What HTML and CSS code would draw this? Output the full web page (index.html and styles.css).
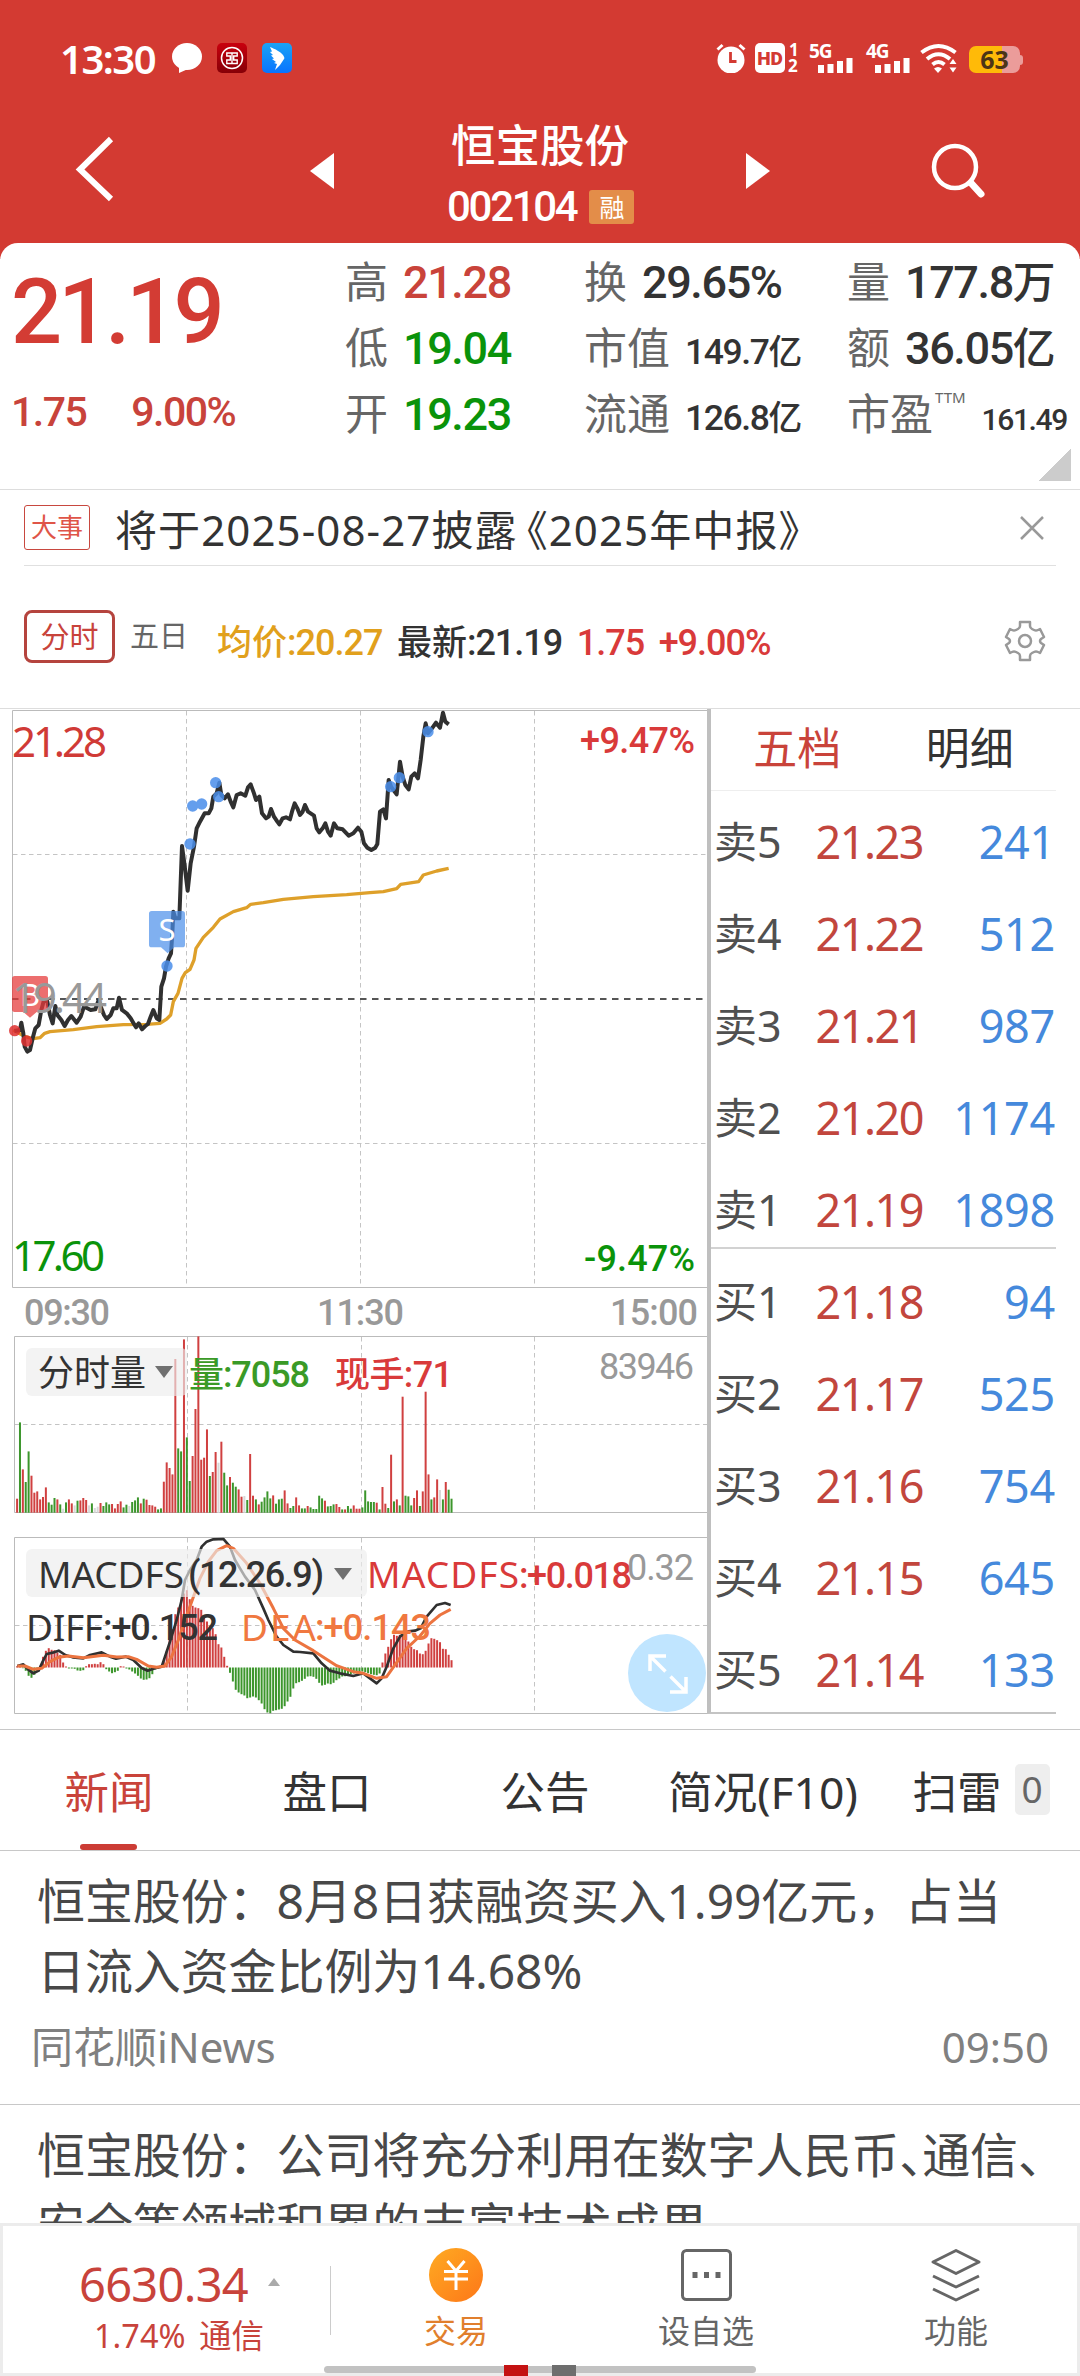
FILE: index.html
```
<!DOCTYPE html>
<html lang="zh-CN">
<head>
    <meta charset="UTF-8">
    <title>恒宝股份 002104</title>
    <link rel="stylesheet" href="styles.css">
</head>
<body>

<div class="app">
    <header class="header">
        <div class="status">
            <span class="clock">13:30</span>
            <svg class="bubble" width="30" height="30" viewBox="0 0 30 30"><ellipse cx="15" cy="13.5" rx="15" ry="13.5" fill="#fff"/><path d="M7 22v8l9-4z" fill="#fff"/></svg>
            <svg class="bank" width="30" height="30" viewBox="0 0 30 30">
                <defs><linearGradient id="bankBg" x2="0" y2="1"><stop offset="0" stop-color="#c9000e"/><stop offset="1" stop-color="#860007"/></linearGradient></defs>
                <rect width="30" height="30" rx="5" fill="url(#bankBg)"/>
                <circle cx="15" cy="15" r="10.500" fill="none" stroke="#fff" stroke-width="1.5"/>
                <path d="M9.800 10h10.400v3h-3.500v4h3.500v3.500H9.800V17h3.500v-4H9.800zM15 10v10.500" fill="none" stroke="#fff" stroke-width="1.400"/>
            </svg>
            <svg class="ding" width="30" height="30" viewBox="0 0 30 30">
                <defs><linearGradient id="dingBg" x2="0" y2="1"><stop offset="0" stop-color="#1ba3f5"/><stop offset="1" stop-color="#0873ff"/></linearGradient></defs>
                <rect width="30" height="30" rx="5" fill="url(#dingBg)"/>
                <path d="M8 4c5 2 11 5 13 8 1 2 2 3 1 4l-4 6-5 5 2-6-3-1 2-1-4-3 2-.5-3-3 2-.5-3-3 2-.5z" fill="#fff"/>
            </svg>
            <div class="status-right">
                <svg width="30" height="30" viewBox="0 0 30 30"><circle cx="15" cy="17" r="13.500" fill="#fff"/><path d="M1.500 6.500l5-4.500M28.500 6.500l-5-4.500" stroke="#fff" stroke-width="3"/><path d="M14.500 9v9.500h6" fill="none" stroke="#d33a32" stroke-width="2.800"/></svg>
                <span class="hd">HD</span>
                <span class="sim"><b>1</b><b>2</b></span>
                <span class="signal"><b>5G</b><svg width="36" height="17" viewBox="0 0 36 17"><path d="M3 17v-8M12.500 17v-9M22 17v-12M31.500 17v-15" stroke="#fff" stroke-width="6"/></svg></span>
                <span class="signal"><b>4G</b><svg width="36" height="17" viewBox="0 0 36 17"><path d="M3 17v-8M12.500 17v-9M22 17v-12M31.500 17v-15" stroke="#fff" stroke-width="6"/></svg></span>
                <svg class="wifi" width="38" height="30" viewBox="0 0 38 30">
                    <path d="M1.500 9.500q17-13 34 0M7 16q11.500-9.500 23 0M12.500 21.500q6-5 12 0" fill="none" stroke="#fff" stroke-width="4"/>
                    <path d="M14 25.500q4-3 8 0l-4 4.500z" fill="#fff"/>
                    <path d="M29.500 21l3.500-5 3.500 5zM29.500 24.500h7l-3.500 5z" fill="#fff"/>
                </svg>
                <span class="battery">63</span>
            </div>
        </div>
        <div class="titlebar">
            <svg class="back" width="40" height="68" viewBox="0 0 40 68"><path d="M36 4L5 34.500 36 64" fill="none" stroke="#fff" stroke-width="6"/></svg>
            <svg class="prev" width="24" height="36" viewBox="0 0 24 36"><path d="M24 0v36L0 18z" fill="#fff"/></svg>
            <div class="stock">
                <div class="stock-name">恒宝股份</div>
                <div class="stock-code"><span>002104</span><em>融</em></div>
            </div>
            <svg class="next" width="24" height="36" viewBox="0 0 24 36"><path d="M0 0v36l24-18z" fill="#fff"/></svg>
            <svg class="search" width="56" height="58" viewBox="0 0 56 58"><circle cx="24" cy="24" r="21" fill="none" stroke="#fff" stroke-width="4.500"/><path d="M40 40l10 11" stroke="#fff" stroke-width="7" stroke-linecap="round"/></svg>
        </div>
    </header>

    <main class="content">
        <section class="quote">
            <div class="price">
                <div class="last">21.19</div>
                <div class="change"><span>1.75</span><span>9.00%</span></div>
            </div>
            <div class="stats">
                <div class="stat">高 <b class="red">21.28</b></div>
                <div class="stat">换 <b>29.65%</b></div>
                <div class="stat">量 <b>177.8<i>万</i></b></div>
                <div class="stat">低 <b class="green">19.04</b></div>
                <div class="stat">市值 <b class="mid">149.7<i>亿</i></b></div>
                <div class="stat">额 <b>36.05<i>亿</i></b></div>
                <div class="stat">开 <b class="green">19.23</b></div>
                <div class="stat">流通 <b class="mid">126.8<i>亿</i></b></div>
                <div class="stat">市盈<sup>TTM</sup> <b class="small">161.49</b></div>
            </div>
            <div class="corner"></div>
        </section>

        <section class="notice">
            <span class="notice-tag">大事</span>
            <span class="notice-text">将于2025-08-27披露<span class="open">《</span>2025年中报》</span>
            <svg class="close" width="24" height="24" viewBox="0 0 24 24"><path d="M1 1l22 22M23 1L1 23" stroke="#999" stroke-width="2.500"/></svg>
        </section>

        <section class="periods">
            <span class="period active">分时</span>
            <span class="period">五日</span>
            <div class="legend">
                <span class="avg"><i>均价</i>:20.27</span>
                <span><i>最新</i>:21.19</span>
                <span class="up">1.75</span>
                <span class="up">+9.00%</span>
            </div>
            <svg class="gear" width="42" height="42" viewBox="0 0 42 42" fill="none" stroke="#999" stroke-width="2.500" stroke-linejoin="round">
                <path d="M16 2h10v4q0 2 2 3l2 1q2 1 4 0l2-1 4 8-3 2q-1 1-1 2t1 2l3 2-4 8-2-1q-2-1-4 0l-2 1q-2 1-2 3v4H16v-4q0-2-2-3l-2-1q-2-1-4 0l-2 1-4-8 3-2q1-1 1-2t-1-2l-3-2 4-8 2 1q2 1 4 0l2-1q2-1 2-3z"/>
                <circle cx="21" cy="21" r="6"/>
            </svg>
        </section>

        <section class="market">
            <svg class="charts" width="707" height="1020" viewBox="0 709 707 1020">
                <!-- frames and grid -->
                <g class="frame">
                    <path d="M707 710.500H12.500v577H707"/>
                    <path d="M707 1336.500H14.500v176H707"/>
                    <path d="M707 1537.500H14.500v176H707"/>
                </g>
                <g class="grid">
                    <path d="M186.500 711v576M360.500 711v576M534.500 711v576M13 854.500h694M13 1143.500h694"/>
                    <path d="M187.500 1337v175M361.500 1337v175M534.500 1337v175M15 1424.500h692"/>
                    <path d="M187.500 1538v175M361.500 1538v175M534.500 1538v175M15 1625.500h692"/>
                </g>
                <path class="zero" d="M12 999h695"/>

                <!-- price and average -->
                <g transform="translate(0 700) scale(.33333)">
                    <polyline class="line-avg" points="40,990 75,1010 100,1016 120,1013 134,1000 150,995 220,989 290,980 370,974 440,973 480,970 500,957 512,945 520,905 534,880 546,835 556,818 570,808 582,780 588,745 610,712 640,682 660,657 700,635 740,623 752,613 790,608 850,598 940,590 1040,584 1110,578 1150,575 1190,566 1202,553 1256,545 1270,525 1310,513 1346,505"/>
                    <polyline class="line-price" points="43,993 60,990 64,968 70,1000 74,1040 82,1055 90,1050 98,1015 106,985 116,975 124,930 132,900 142,905 150,945 158,970 166,918 172,945 184,960 194,978 204,960 214,948 230,968 242,950 252,920 262,925 272,930 286,928 296,900 304,925 312,945 320,957 332,945 340,925 350,925 357,893 366,930 380,940 392,955 402,972 408,982 416,970 426,988 436,978 444,972 452,950 460,930 470,955 478,960 484,860 492,835 498,800 506,775 513,760 517,700 520,635 526,655 538,655 546,438 553,490 563,572 572,490 582,440 590,385 600,365 614,340 626,340 634,325 640,290 650,280 658,248 664,285 674,295 684,283 692,305 700,322 710,285 722,280 736,287 744,262 752,253 762,280 768,300 778,290 786,340 798,355 806,350 813,327 822,350 832,365 838,373 848,355 858,352 870,358 876,335 884,310 892,325 900,345 908,335 915,315 924,335 942,347 950,385 958,397 968,385 976,370 984,395 992,407 1002,370 1012,385 1028,388 1046,407 1060,400 1074,383 1084,395 1092,430 1102,443 1114,450 1126,443 1132,432 1140,335 1150,328 1158,355 1166,240 1174,262 1190,283 1200,185 1208,230 1216,255 1226,268 1234,230 1244,220 1254,235 1262,180 1270,110 1277,70 1284,100 1296,85 1308,68 1320,83 1329,38 1336,65 1346,73"/>
                    <g class="sell-dot"><circle cx="647" cy="248" r="17"/><circle cx="656" cy="290" r="17"/><circle cx="578" cy="318" r="17"/><circle cx="605" cy="312" r="17"/><circle cx="570" cy="432" r="17"/><circle cx="501" cy="798" r="17"/><circle cx="1172" cy="260" r="17"/><circle cx="1198" cy="233" r="17"/><circle cx="1284" cy="95" r="17"/></g>
                    <g class="buy-dot"><circle cx="44" cy="992" r="17"/><circle cx="80" cy="1023" r="17"/></g>
                    <path d="M455 633h92q8 0 8 8v93q0 8-8 8h-24l-20 18-20-18h-28q-8 0-8-8v-93q0-8 8-8z" fill="#4a8eea" opacity=".7"/>
                    <path d="M44 828h92q8 0 8 8v92q0 8-8 8h-26l-20 17-20-17h-26q-8 0-8-8v-92q0-8 8-8z" fill="#e63c3c" opacity=".74"/>
                </g>
                <text class="mark" x="167" y="941" text-anchor="middle">S</text>
                <text class="mark" x="30" y="1006" text-anchor="middle">B</text>

                <text class="axis red" x="12" y="756.500" textLength="95">21.28</text>
                <text class="axis grey" x="12" y="1012.500" textLength="95">19.44</text>
                <text class="axis green" x="12" y="1270.500" textLength="93">17.60</text>
                <text class="num up" x="580" y="753" textLength="115">+9.47%</text>
                <text class="num green" x="584" y="1271" textLength="111">-9.47%</text>
                <text class="num grey" x="24" y="1325" textLength="86">09:30</text>
                <text class="num grey" x="317" y="1325" textLength="87">11:30</text>
                <text class="num grey" x="610" y="1325" textLength="88">15:00</text>

                <!-- volume -->
                <g id="volume"></g>
                <rect class="chip" x="26" y="1348" width="161" height="48" rx="6"/>
                <text class="cjk dark" x="38" y="1386" textLength="108">分时量</text>
                <path class="caret" d="M155 1366h18l-9 12z"/>
                <text class="num vol-green" x="189" y="1386.500" textLength="121"><tspan class="cjk">量</tspan>:7058</text>
                <text class="num up" x="335" y="1386.500" textLength="118"><tspan class="cjk">现手</tspan>:71</text>
                <text class="num grey light" x="599" y="1379" textLength="95">83946</text>

                <!-- macd -->
                <g id="macd"></g>
                <g transform="translate(0 1280) scale(.33333)">
                    <polyline class="line-diff" points="52,1158 70,1153 84,1168 100,1180 116,1172 128,1145 140,1122 158,1118 176,1112 196,1125 218,1132 250,1135 270,1125 305,1117 330,1130 348,1136 378,1130 400,1140 425,1164 443,1172 465,1165 485,1160 495,1130 510,1085 530,1020 545,960 555,900 570,870 590,840 605,800 620,785 640,778 670,777 690,800 705,840 735,890 765,930 790,985 805,1020 830,1070 850,1095 880,1115 900,1116 940,1120 965,1150 990,1172 1020,1180 1060,1188 1090,1180 1110,1195 1130,1210 1145,1195 1160,1160 1180,1105 1200,1070 1220,1055 1245,1052 1262,1045 1280,1010 1310,975 1335,969 1352,975"/>
                    <polyline class="line-dea" points="52,1158 75,1158 100,1168 125,1165 150,1145 175,1132 205,1128 250,1133 310,1126 350,1131 385,1130 410,1138 445,1158 470,1162 495,1158 515,1130 535,1080 555,1020 575,965 600,895 625,845 650,812 680,797 700,805 740,850 780,910 820,985 850,1045 885,1080 940,1112 975,1135 1010,1157 1060,1175 1090,1180 1130,1195 1160,1190 1185,1155 1220,1105 1260,1068 1290,1030 1320,1005 1352,988"/>
                </g>
                <rect class="chip" x="26" y="1549" width="341" height="48" rx="6"/>
                <text class="latin dark" x="38" y="1588" textLength="146">MACDFS</text>
                <text class="num dark" x="188" y="1587" textLength="136">(12.26.9)</text>
                <path class="caret" d="M334 1568h18l-9 12z"/>
                <text class="latin up" x="367" y="1588" textLength="152">MACDFS</text>
                <text class="num up" x="519" y="1587.500" textLength="113">:+0.018</text>
                <text class="num grey light" x="627" y="1580" textLength="67">0.32</text>
                <text class="latin dark" x="26" y="1640.500" textLength="77">DIFF</text>
                <text class="num dark" x="103" y="1640" textLength="115">:+0.152</text>
                <text class="latin dea" x="241" y="1640.500" textLength="75">DEA</text>
                <text class="num dea" x="315" y="1640" textLength="116">:+0.143</text>

                <circle cx="667" cy="1673" r="39" fill="#c0e5ff"/>
                <path d="M650 1671v-15h16M650.500 1656.500l15 15M686 1677v15h-16M685.500 1691.500l-15-15" fill="none" stroke="#fff" stroke-width="3.500"/>
            </svg>

            <div class="book">
                <div class="book-tabs"><span class="active">五档</span><span>明细</span></div>
                <div class="levels sell">
                    <div class="level"><span>卖5</span><b>21.23</b><i>241</i></div>
                    <div class="level"><span>卖4</span><b>21.22</b><i>512</i></div>
                    <div class="level"><span>卖3</span><b>21.21</b><i>987</i></div>
                    <div class="level"><span>卖2</span><b>21.20</b><i>1174</i></div>
                    <div class="level"><span>卖1</span><b>21.19</b><i>1898</i></div>
                </div>
                <div class="levels buy">
                    <div class="level"><span>买1</span><b>21.18</b><i>94</i></div>
                    <div class="level"><span>买2</span><b>21.17</b><i>525</i></div>
                    <div class="level"><span>买3</span><b>21.16</b><i>754</i></div>
                    <div class="level"><span>买4</span><b>21.15</b><i>645</i></div>
                    <div class="level"><span>买5</span><b>21.14</b><i>133</i></div>
                </div>
            </div>
        </section>

        <nav class="tabs">
            <span class="tab active">新闻</span>
            <span class="tab">盘口</span>
            <span class="tab">公告</span>
            <span class="tab">简况(F10)</span>
            <span class="tab">扫雷<em>0</em></span>
        </nav>

        <article class="news">
            <h2>恒宝股份：8月8日获融资买入1.99亿元，占当<br>日流入资金比例为14.68%</h2>
            <div class="meta"><span>同花顺iNews</span><span>09:50</span></div>
        </article>
        <article class="news">
            <h2>恒宝股份：公司将充分利用在数字人民币<span class="half">、</span>通信、<br>安全等领域积累的丰富技术成果</h2>
        </article>
    </main>

    <footer class="bottom">
        <div class="index">
            <div class="index-value">6630.34 <i></i></div>
            <div class="index-change">1.74% <span>通信</span></div>
        </div>
        <div class="action trade">
            <svg width="54" height="54" viewBox="0 0 54 54">
                <defs><linearGradient id="coin" x2="1" y2="1"><stop offset="0" stop-color="#ffab22"/><stop offset="1" stop-color="#fd7718"/></linearGradient></defs>
                <circle cx="27" cy="27" r="27" fill="url(#coin)"/>
                <path d="M18.500 13l8.500 10 8.500-10M27 23v19M15 23.500h24M15 31h24" fill="none" stroke="#fff" stroke-width="3"/>
            </svg>
            <span>交易</span>
        </div>
        <div class="action">
            <svg width="54" height="54" viewBox="0 0 54 54"><rect x="3.500" y="2.500" width="48" height="49" rx="4" fill="none" stroke="#666" stroke-width="3"/><path d="M13.500 27h5M25 27h5M36.500 27h5" stroke="#666" stroke-width="6"/></svg>
            <span>设自选</span>
        </div>
        <div class="action">
            <svg width="54" height="54" viewBox="0 0 54 54" fill="none" stroke="#666" stroke-width="3" stroke-linejoin="round"><path d="M27 2.500L50 14 27 25.500 4 14z"/><path d="M4 28l23 11 23-11M4 41l23 11 23-11"/></svg>
            <span>功能</span>
        </div>
        <div class="home-bar"><i></i><i></i></div>
    </footer>
</div>

<script>
    // one bar per minute from 09:30: r = up, g = down, w = flat
    const volume = 'r42 g271 r130 g92 g184 r111 r60 r64 r40 r47 r76 g31 g24 g44 r40 g25 w12 g31 r40 r28 w22 g36 r37 r44 r38 w22 g28 w14 w18 r29 g20 g31 g25 r26 r13 r26 r34 g16 g24 w20 g32 g37 g46 r28 g42 r39 r23 r22 r18 g10 g13 r93 r151 r134 r115 r461 g193 g184 r520 g226 g95 r170 r311 r529 r159 r165 r250 g110 r122 r182 w150 r213 g120 g82 r107 g90 g78 r70 r48 w50 g38 r176 r51 g40 r25 g33 g46 g64 g43 r52 g27 g40 g42 r67 r28 g14 g20 r46 r22 g13 g13 r20 g16 g11 g11 g51 g43 r36 g19 g20 g25 r26 r17 g10 r10 g20 g12 r22 r12 r12 g16 g67 g34 g32 g32 r30 g10 r77 r27 g14 r174 g34 r40 g22 r348 g51 g49 g22 r44 r67 g20 r64 r363 r115 g40 r46 r100 w68 g40 r92 g69 g42'.split(' ');
    const macd = [4,3,-2,-10,-25,-31,-22,-12,5,32,50,58,53,52,45,38,15,3,-3,-3,-4,-9,-10,-8,4,10,10,11,10,16,10,-5,-12,-17,-14,-10,4,3,-3,-6,-12,-18,-25,-33,-37,-36,-32,-20,-6,-3,6,20,50,90,115,160,180,205,222,232,205,185,180,178,173,155,138,125,118,100,70,60,32,5,-16,-42,-67,-75,-80,-84,-92,-90,-87,-90,-98,-108,-125,-135,-137,-130,-128,-126,-124,-116,-102,-88,-63,-47,-44,-40,-34,-27,-26,-28,-34,-46,-54,-52,-48,-50,-46,-38,-33,-27,-26,-22,-20,-18,-17,-14,-12,-14,-17,-20,-22,-23,-18,15,42,62,85,98,95,98,104,92,78,62,55,52,42,40,50,72,88,86,82,76,56,55,38,22];
    const colors = { r: '#d04040', g: '#3c962c', w: '#d8d8d8' };

    function bar(i, base, h, color) {
        const x = 16.1 + i * 2.877;
        const y = h > 0 ? base - h / 3 : base;
        return `<rect x="${x.toFixed(2)}" y="${y.toFixed(1)}" width="2" height="${(Math.abs(h) / 3).toFixed(1)}" fill="${color}"/>`;
    }

    document.getElementById('volume').innerHTML =
        volume.map((v, i) => bar(i, 1512.7, Number(v.slice(1)), colors[v[0]])).join('');
    document.getElementById('macd').innerHTML =
        macd.map((v, i) => bar(i, 1667.5, v, v > 0 ? colors.r : colors.g)).join('');
</script>

</body>
</html>
```
FILE: styles.css
```
* {
    box-sizing: border-box;
}
body {
    margin: 0;
    background: #fff;
    color: #333;
    font-family: "Noto Sans", "Noto Sans CJK SC", sans-serif;
}
i, em {
    font-style: normal;
}
svg {
    display: block;
    flex: none;
}
.red { color: #c9433a; fill: #d03a36; }
.green { color: #0a930a; fill: #0a930a; }
.up { color: #d93a3a; fill: #d93a3a; }
.grey { fill: #999; }
.dark { fill: #333; }

.app {
    width: 1080px;
    height: 2376px;
    display: flex;
    flex-direction: column;
    overflow: hidden;
}

/* header */
.header {
    height: 259px;
    background: #d33a32;
    color: #fff;
    flex: none;
}
.status {
    height: 116px;
    padding: 0 57px 0 60px;
    display: flex;
    align-items: center;
}
.clock {
    width: 112px;
    font-size: 40px;
    font-weight: 600;
    letter-spacing: -1.500px;
}
.bank, .ding {
    margin-left: 15px;
}
.status-right {
    margin-left: auto;
    display: flex;
    align-items: center;
}
.hd {
    width: 30px;
    height: 30px;
    margin-left: 9px;
    border-radius: 5px;
    background: #fff;
    color: #d33a32;
    font: 900 19px/31px Roboto, sans-serif;
    text-align: center;
}
.sim {
    width: 20px;
    padding-left: 3px;
    font-size: 17px;
    line-height: 16px;
}
.sim b {
    display: block;
}
.sim b:first-child {
    padding-left: 1px;
}
.signal {
    width: 57px;
    height: 30px;
    padding-left: 4px;
}
.signal b {
    display: block;
    height: 13px;
    font-size: 19px;
    line-height: 16px;
    letter-spacing: -1px;
}
.signal svg {
    margin-left: 9px;
}
.wifi {
    margin-left: 1px;
}
.battery {
    position: relative;
    width: 51px;
    height: 27px;
    margin: 3px 3px 0 11px;
    border-radius: 7px;
    background: linear-gradient(90deg, #ffba08 64%, #eb9c9a 64%);
    color: #4c3516;
    font-weight: 700;
    font-size: 25px;
    line-height: 27px;
    text-align: center;
}
.battery::after {
    content: "";
    position: absolute;
    right: -3px;
    top: 9px;
    width: 3px;
    height: 10px;
    border-radius: 0 3px 3px 0;
    background: #eb9c9a;
}
.titlebar {
    display: flex;
    align-items: flex-start;
}
.back { margin: 19px 0 0 75px; }
.prev { margin: 37px 0 0 195px; }
.next { margin: 37px 0 0 111px; }
.search { margin: 27px 0 0 161px; }
.stock {
    width: 186px;
    margin-left: 115px;
}
.stock-name {
    padding-left: 2px;
    font-size: 44.500px;
    line-height: 58px;
    font-weight: 500;
}
.stock-code {
    display: flex;
    align-items: center;
    height: 66px;
    margin-left: -2px;
    font: 500 42px/68px Roboto, sans-serif;
    letter-spacing: -2.300px;
}
.stock-code em {
    width: 45px;
    height: 34px;
    margin-left: 13px;
    border-radius: 3px;
    background: #e38d49;
    font: 25px/33px "Noto Sans CJK SC", sans-serif;
    letter-spacing: 0;
    text-align: center;
}

/* main */
.content {
    flex: 1;
    min-height: 0;
    overflow: hidden;
    margin-top: -16px;
    border-radius: 18px 18px 0 0;
    background: #fff;
}
.quote {
    position: relative;
    display: flex;
    height: 247px;
    border-bottom: 1px solid #ddd;
}
.price {
    width: 345px;
    padding-left: 11px;
    color: #d33c34;
    font-family: Roboto, sans-serif;
    font-weight: 500;
}
.last {
    margin-top: 19px;
    font-size: 90px;
    line-height: 102px;
    letter-spacing: -4px;
}
.change {
    margin-top: 22px;
    display: flex;
    gap: 45px;
    font-size: 41px;
    line-height: 53px;
    letter-spacing: -1.500px;
    color: #c8433b;
}
.stats {
    display: grid;
    grid-template-columns: 239px 263px 1fr;
    grid-auto-rows: 66px;
    flex: 1;
    padding-top: 8px;
}
.stat {
    display: flex;
    align-items: baseline;
    font-size: 43px;
    line-height: 62px;
    color: #666;
    white-space: nowrap;
}
.stat b {
    margin-left: 15px;
    font-family: Roboto, sans-serif;
    font-weight: 500;
    font-size: 45px;
    letter-spacing: -1.400px;
    color: #333;
}
.stat b.red { color: #c9433a; }
.stat b.green { color: #0a930a; }
.stat b.mid { font-size: 35.500px; }
.stat b.small { font-size: 30px; margin-left: 16px; }
.stat i {
    font-family: "Noto Sans CJK SC", sans-serif;
    font-size: .95em;
    line-height: 1;
}
.stat sup {
    font-size: 15px;
    line-height: 1;
    align-self: flex-start;
    margin: 7px 0 0 2px;
}
.corner {
    position: absolute;
    right: 9px;
    bottom: 8px;
    width: 33px;
    height: 33px;
    background: linear-gradient(135deg, transparent 50%, #ccc 50%);
}
.notice {
    display: flex;
    align-items: center;
    height: 76px;
    margin: 0 24px;
    border-bottom: 1px solid #e0e0e0;
}
.notice-tag {
    width: 66px;
    height: 45px;
    margin-right: 25px;
    border: 1px solid #c8483f;
    border-radius: 3px;
    color: #df5548;
    font-size: 26px;
    line-height: 43px;
    text-align: center;
}
.notice-text {
    margin-top: 5px;
    font-size: 42px;
    line-height: 50px;
    letter-spacing: 1.100px;
    white-space: nowrap;
}
.open {
    margin-left: -12px;
}
.close {
    margin-left: auto;
    margin-right: 12px;
}
.periods {
    display: flex;
    align-items: center;
    height: 143px;
    padding: 0 34px 0 24px;
    border-bottom: 1px solid #ddd;
}
.period {
    height: 53px;
    margin-top: -1px;
    font-size: 29px;
    line-height: 51px;
    color: #666;
}
.period.active {
    width: 91px;
    margin-right: 15px;
    border: 3px solid #b5443e;
    border-radius: 8px;
    color: #c8433b;
    line-height: 48px;
    text-align: center;
}
.legend {
    display: flex;
    align-items: baseline;
    gap: 14.500px;
    margin: 12px 0 0 29px;
    font: 500 36px/50px Roboto, sans-serif;
    letter-spacing: -1px;
    white-space: nowrap;
}
.legend i {
    font-family: "Noto Sans CJK SC", sans-serif;
    font-size: 35px;
    line-height: 1;
    letter-spacing: 0;
}
.avg { color: #e1a01c; }
.gear {
    margin: 7px 0 0 auto;
}

/* charts */
.market {
    display: flex;
    height: 1020px;
}
.charts text {
    white-space: pre;
}
.frame path {
    fill: none;
    stroke: #bbb;
}
.grid path {
    fill: none;
    stroke: #c4c4c4;
    stroke-dasharray: 4.500 3.500;
}
.zero {
    stroke: #555;
    stroke-width: 1.800;
    stroke-dasharray: 6.500 5.500;
}
.line-price, .line-avg, .line-diff, .line-dea {
    fill: none;
    stroke-linejoin: round;
}
.line-price { stroke: #303030; stroke-width: 12; }
.line-avg { stroke: #dea02a; stroke-width: 10; }
.line-diff { stroke: #303030; stroke-width: 8; }
.line-dea { stroke: #ec7440; stroke-width: 9; }
.sell-dot { fill: #4a8eea; opacity: .85; }
.buy-dot { fill: #e03030; opacity: .85; }
.mark { font-size: 31px; fill: #fff; }
.axis { font-size: 42px; }
.num { font: 500 36px Roboto, sans-serif; }
.num.light { font-weight: 400; }
.cjk { font: 500 35px "Noto Sans CJK SC", sans-serif; }
.cjk.dark { font-weight: 400; font-size: 36px; }
.latin { font-size: 37px; }
.vol-green { fill: #3a9a26; }
.dea { fill: #f07840; }
.chip { fill: #ececec; opacity: .65; }
.caret { fill: #707070; }

/* order book */
.book {
    width: 349px;
    height: 1005px;
    border-left: 4px solid #bfbfbf;
    border-bottom: 2px solid #c4c4c4;
}
.book-tabs {
    display: flex;
    height: 82px;
    border-bottom: 1px solid #eee;
    font-size: 44px;
    line-height: 79px;
}
.book-tabs span {
    width: 173px;
    text-align: center;
}
.book-tabs .active {
    color: #c9433a;
}
.levels.sell {
    margin-top: -4px;
    border-bottom: 2px solid #d2d2d2;
}
.levels.buy {
    margin-top: -2px;
}
.level {
    display: grid;
    grid-template-columns: 84px 125px 132px;
    height: 92px;
    padding: 19px 0 0 3px;
    font-size: 43px;
    line-height: 72px;
    color: #505050;
}
.level b, .level i {
    font-size: 45px;
    font-weight: 400;
    text-align: right;
}
.level b {
    letter-spacing: -1.500px;
    color: #c2463d;
}
.level i {
    letter-spacing: -.300px;
    color: #4589dc;
}

/* news */
.tabs {
    display: grid;
    grid-template-columns: repeat(5, 218px);
    height: 122px;
    border-top: 1px solid #c8c8c8;
    border-bottom: 1px solid #c8c8c8;
    overflow: hidden;
}
.tab {
    display: flex;
    align-items: center;
    justify-content: center;
    position: relative;
    padding-bottom: 1px;
    font-size: 44.500px;
    white-space: nowrap;
}
.tab.active {
    color: #c9433a;
}
.tab.active::after {
    content: "";
    position: absolute;
    left: 80px;
    bottom: 0;
    width: 57px;
    height: 6px;
    border-radius: 3px;
    background: #cc3c35;
}
.tab em {
    width: 35px;
    height: 51px;
    margin-left: 13px;
    border-radius: 5px;
    background: #eee;
    color: #666;
    font-size: 37px;
    line-height: 50px;
    text-align: center;
}
.news {
    height: 254px;
    padding: 15px 31px 0 37px;
    border-bottom: 1px solid #c8c8c8;
}
.news h2 {
    margin: 0;
    font-size: 48px;
    font-weight: 400;
    line-height: 70px;
    letter-spacing: -.100px;
    color: #484848;
    white-space: nowrap;
}
.half {
    letter-spacing: -25px;
}
.meta {
    display: flex;
    justify-content: space-between;
    margin: 11px 0 0 -6px;
    font-size: 42px;
    line-height: 60px;
    color: #808080;
}

/* bottom bar */
.bottom {
    position: relative;
    display: grid;
    grid-template-columns: 328px 250px 250px 250px;
    height: 153px;
    flex: none;
    border: 3px solid #ececec;
    background: #fff;
}
.index {
    position: relative;
    color: #c8433b;
    padding-left: 76px;
}
.index::after {
    content: "";
    position: absolute;
    right: 0;
    top: 40px;
    height: 69px;
    border-right: 1px solid #ccc;
}
.index-value {
    display: flex;
    align-items: center;
    margin-top: 31px;
    font-size: 47px;
    line-height: 54px;
    letter-spacing: -.700px;
}
.index-value i {
    margin-left: 20px;
    margin-top: -4px;
    border: 6px solid transparent;
    border-top: 0;
    border-bottom: 8px solid #aaa;
}
.index-change {
    padding-left: 15px;
    font-size: 32.500px;
    line-height: 50px;
}
.index-change span {
    margin-left: 5px;
}
.action {
    display: flex;
    flex-direction: column;
    align-items: center;
    padding-top: 22px;
    color: #666;
    font-size: 32px;
    line-height: 50px;
}
.action span {
    margin-top: 4px;
}
.trade {
    color: #e17f2d;
}
.home-bar {
    position: absolute;
    left: 321px;
    bottom: 0;
    width: 432px;
    height: 7px;
    border-radius: 4px;
    background: #c2c2c2;
    display: flex;
    gap: 24px;
    padding-left: 180px;
}
.home-bar i {
    width: 24px;
    height: 11px;
    margin-top: -1px;
    background: #c41212;
}
.home-bar i + i {
    background: #6e6e6e;
}
```
